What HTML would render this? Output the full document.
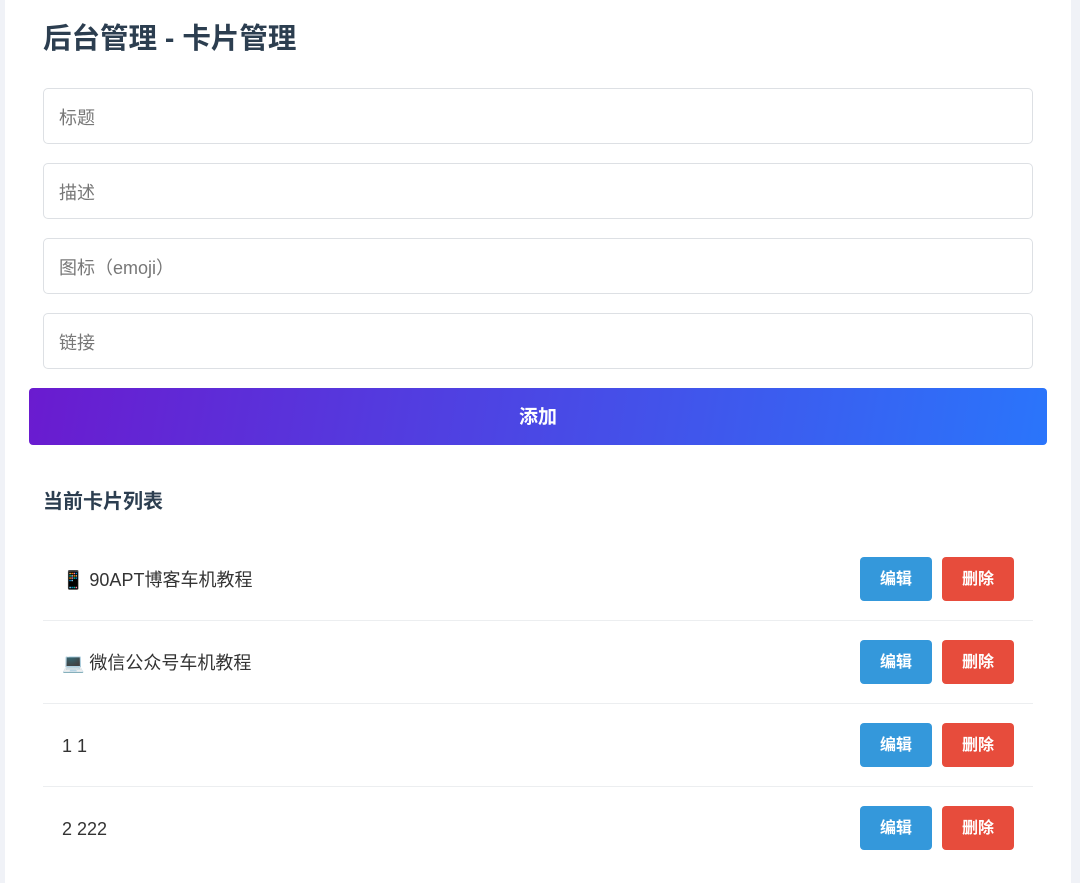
<!DOCTYPE html>
<html><head><meta charset="utf-8"><style>
body{margin:0;background:#f0f2f7;font-family:"Liberation Sans","Noto Sans CJK SC",sans-serif;width:1080px;height:883px;overflow:hidden}
.panel{position:absolute;left:5px;top:0;width:1066px;height:883px;background:#fff}
h1{position:absolute;left:43px;top:19px;margin:0;font-size:28.5px;color:#2c3e50;font-weight:bold;line-height:40px}
.in{position:absolute;left:43px;width:988px;height:54px;border:1px solid #dde0e4;border-radius:5px;box-sizing:content-box;color:#777;font-size:18px;line-height:58px;text-indent:15px}
.add{position:absolute;left:29px;top:388px;width:1018px;height:57px;border-radius:4px;background:linear-gradient(100deg,#6a1bcf,#2a75fb);color:#fff;font-weight:bold;font-size:19px;text-align:center;line-height:60px}
h2{position:absolute;left:43px;top:487px;margin:0;font-size:20px;color:#2c3e50;line-height:30px}
.row{position:absolute;left:43px;width:990px;height:82px;border-bottom:1px solid #eceef0;font-size:18px;color:#333;line-height:85px}
.row span.t{position:absolute;left:19px}
.b{position:absolute;top:19px;width:72px;height:44px;border-radius:4px;color:#fff;font-size:16px;font-weight:bold;text-align:center;line-height:46px}
.e{left:817px;background:#3498db}.d{left:899px;background:#e74c3c}
</style></head><body>
<div class="panel"></div>
<h1>后台管理 - 卡片管理</h1>
<div class="in" style="top:88px">标题</div>
<div class="in" style="top:163px">描述</div>
<div class="in" style="top:238px">图标（emoji）</div>
<div class="in" style="top:313px">链接</div>
<div class="add">添加</div>
<h2>当前卡片列表</h2>
<div class="row" style="top:538px"><span class="t">📱 90APT博客车机教程</span><div class="b e">编辑</div><div class="b d">删除</div></div>
<div class="row" style="top:621px"><span class="t">💻 微信公众号车机教程</span><div class="b e">编辑</div><div class="b d">删除</div></div>
<div class="row" style="top:704px"><span class="t">1 1</span><div class="b e">编辑</div><div class="b d">删除</div></div>
<div class="row" style="top:787px;border-bottom:none"><span class="t">2 222</span><div class="b e">编辑</div><div class="b d">删除</div></div>
</body></html>
